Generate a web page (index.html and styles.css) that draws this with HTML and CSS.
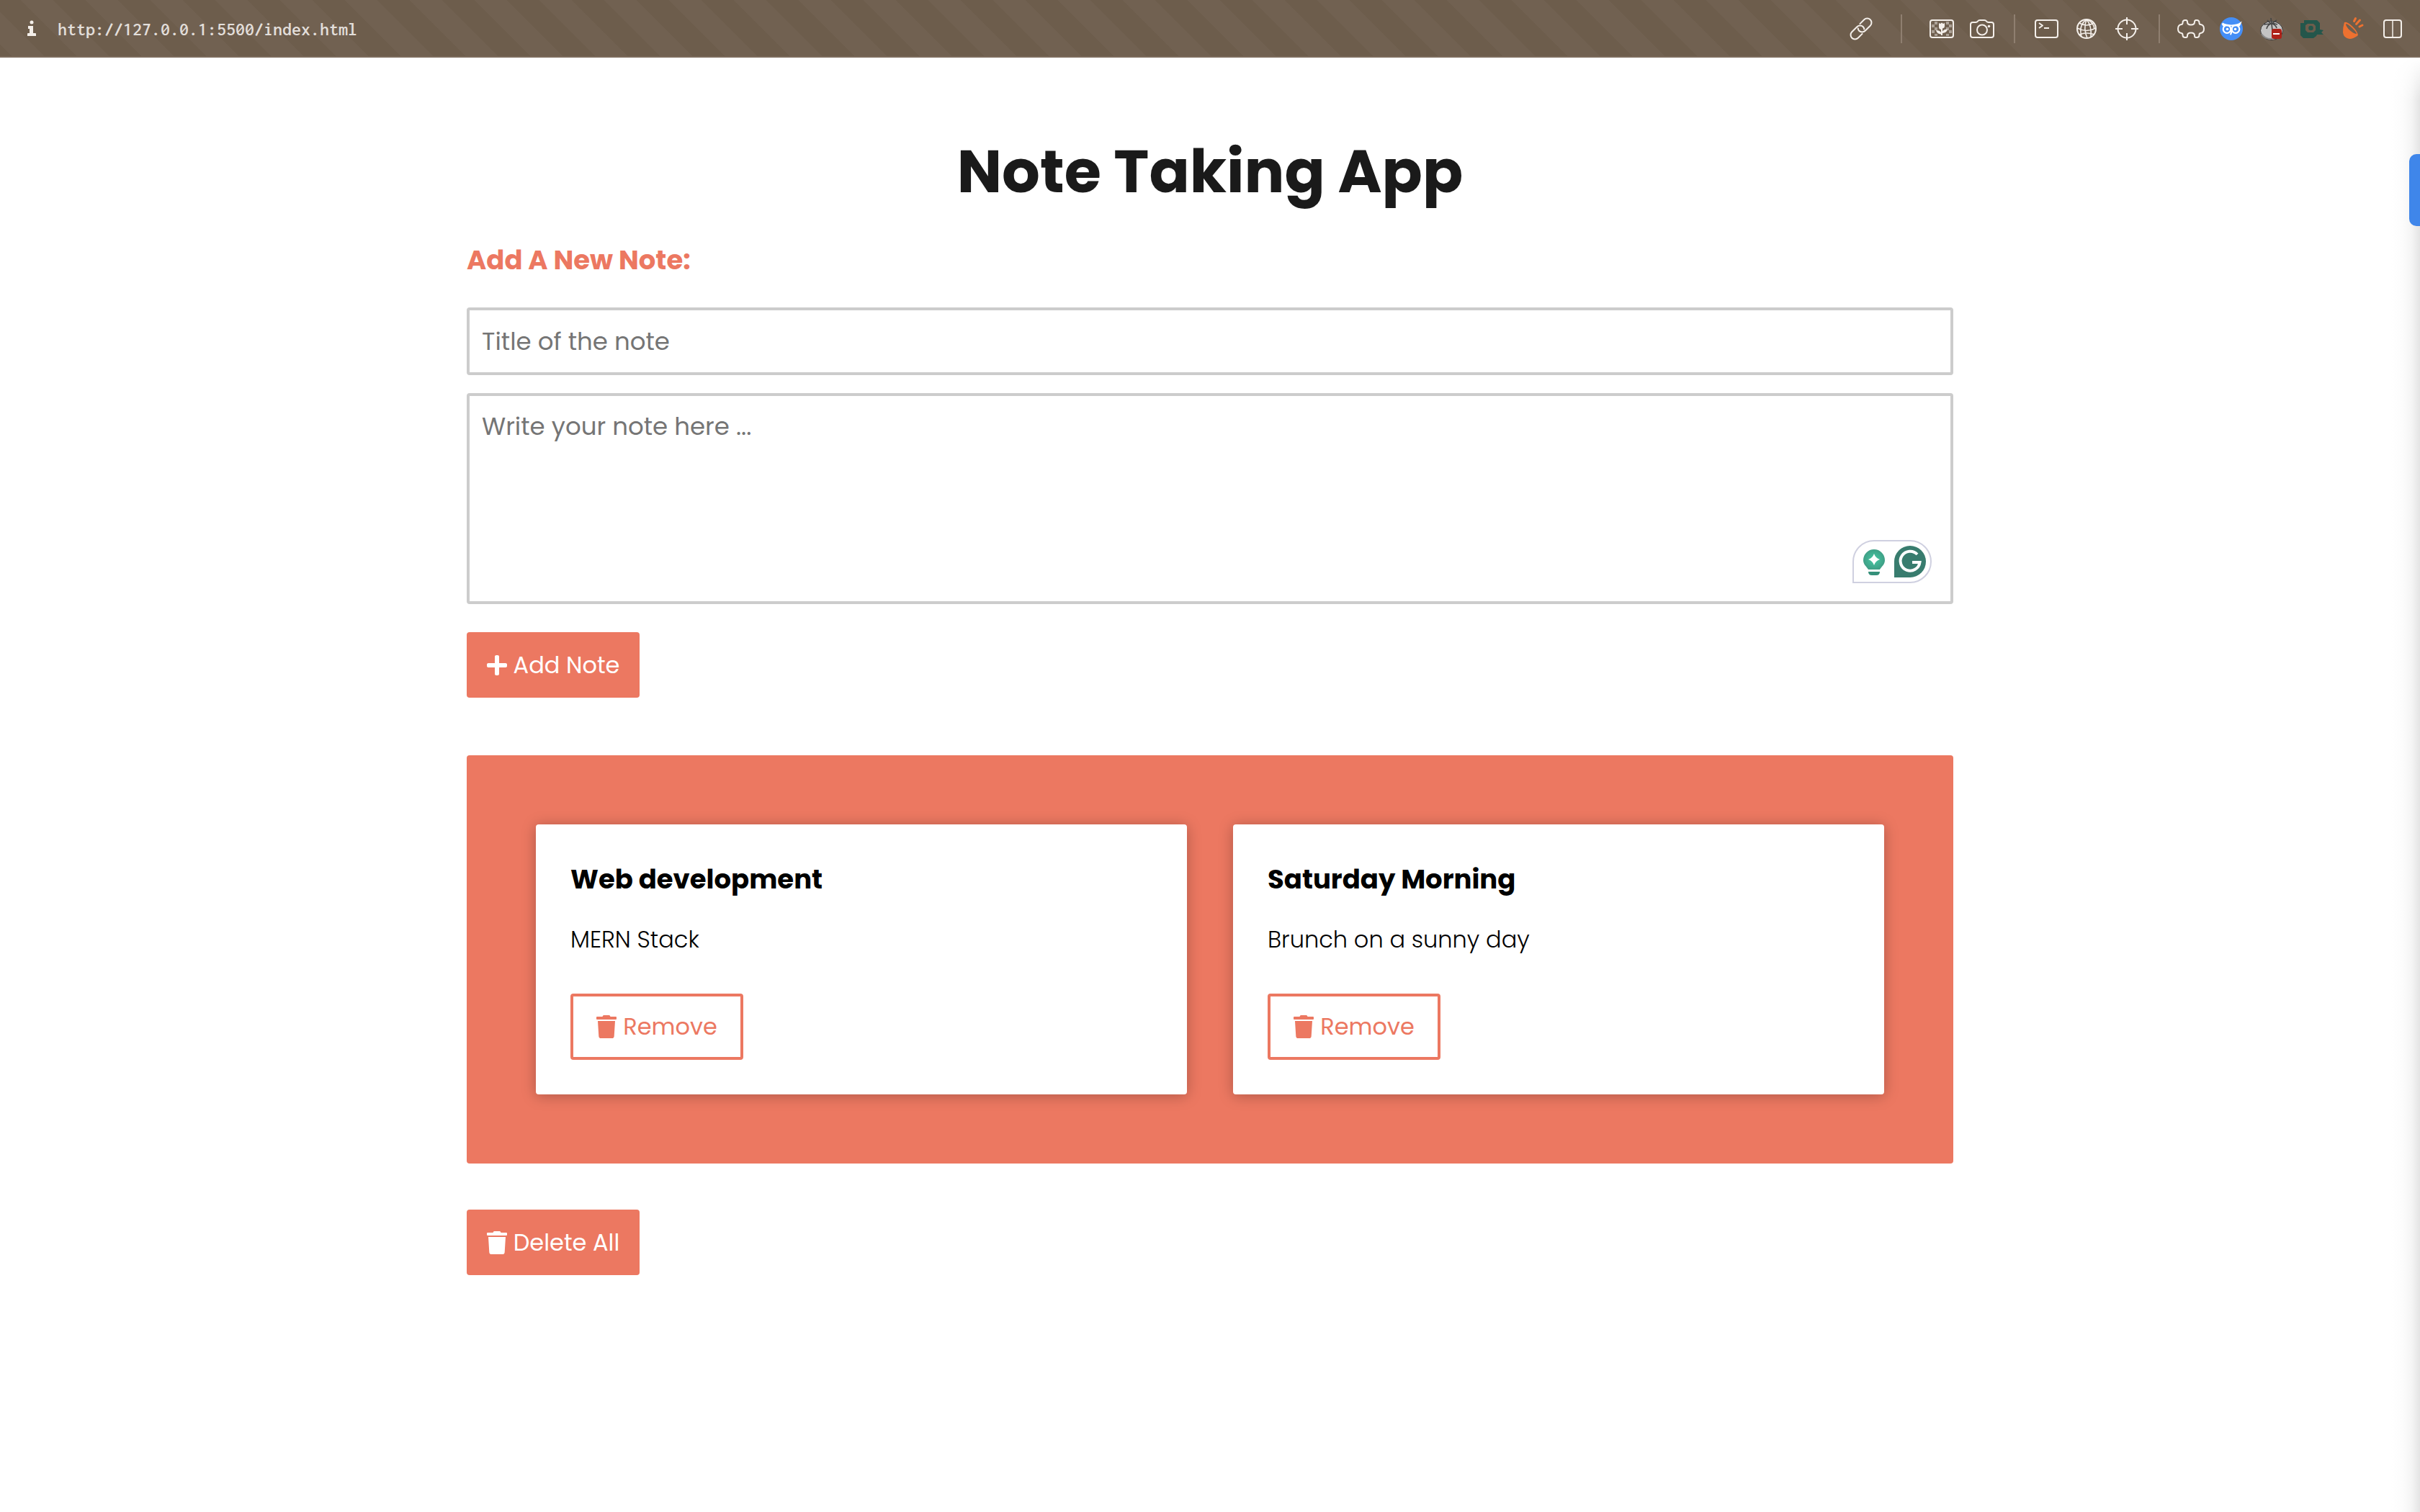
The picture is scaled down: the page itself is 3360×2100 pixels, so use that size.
FILE: index.html
```html
<!DOCTYPE html>
<html lang="en">
<head>
<meta charset="utf-8">
<meta name="viewport" content="width=device-width, initial-scale=1">
<title>Note Taking App</title>
<link rel="stylesheet" href="styles.css">
</head>
<body>
<header class="toolbar">
  <button class="site-info" type="button" aria-label="Site information">
    <svg viewBox="0 0 12 22" width="12" height="22" fill="currentColor"><circle cx="6" cy="3" r="2.500"/><path d="M1 8h7v10h3q1 0 1 1v3H0v-3q0-1 1-1h2v-6H1z"/></svg>
  </button>
  <input class="address" type="text" aria-label="Address" value="http://127.0.0.1:5500/index.html">
  <nav class="tools" aria-label="Browser tools">
    <button class="tool" type="button" aria-label="Copy link">
      <svg class="line" viewBox="0 0 40 40"><g transform="rotate(-45 20 20)"><path d="M17 26H8a6 6 0 0 1 0-12h10a6 6 0 0 1 6 6 5 5 0 0 1-2 4"/><path d="M23 14h9a6 6 0 0 1 0 12H22a6 6 0 0 1-6-6 5 5 0 0 1 2-4"/></g></svg>
    </button>
    <span class="divider divider-wide"></span>
    <button class="tool" type="button" aria-label="Images">
      <svg class="line" viewBox="0 0 40 40"><rect x="4" y="8" width="32" height="24" rx="3"/><g fill="currentColor" stroke="none"><path opacity=".45" d="M10 10h4v4h-4zM26 10h4v4h-4zM6 14h4v4H6zM30 14h4v4h-4zM10 18h4v4h-4zM26 18h4v4h-4zM6 22h4v4H6zM30 22h4v4h-4zM10 27h4v3h-4zM26 27h4v3h-4z"/><path d="M16 12l2 1 2-1.500 2 1.500 2-1v4q0 3-3 3.500v4q2-3 7-3-1 5-7 5.500V29h-2v-1.500q-6-.5-7-5.500 5 0 7 3v-4q-3-.5-3-3.500z"/></g></svg>
    </button>
    <button class="tool" type="button" aria-label="Capture page">
      <svg class="line" viewBox="0 0 40 40"><path d="M4 14q0-3 3-3h4q2 0 3-1.500T17 8h6q2 0 3 1.500t3 1.500h4q3 0 3 3v15q0 3-3 3H7q-3 0-3-3z"/><circle cx="20" cy="21.500" r="7"/><circle cx="29.500" cy="16.500" r="1.800" fill="currentColor" stroke="none"/></svg>
    </button>
    <span class="divider"></span>
    <button class="tool" type="button" aria-label="Console">
      <svg class="line" viewBox="0 0 40 40"><rect x="5" y="8" width="31" height="24" rx="3"/><path d="M10 12l5 3.500-5 3.500M17 19h7"/></svg>
    </button>
    <button class="tool" type="button" aria-label="Network">
      <svg class="line" viewBox="0 0 40 40"><circle cx="20" cy="20" r="13"/><g stroke-width="1.600"><path d="M20 7C13 12 10 20 13 31M20 7c-3 8-3 17 1 26M20 7c5 6 7 14 6 24M20 7c6 2 10 7 11 13M10 12q10 6 20 0M7 19q13 7 26 0M10 28q10-4 21 0"/></g></svg>
    </button>
    <button class="tool" type="button" aria-label="Inspect">
      <svg class="line" viewBox="0 0 40 40"><circle cx="20" cy="20" r="12.500"/><path d="M20 4v10M20 26v10M4 20h10M26 20h10"/></svg>
    </button>
    <span class="divider"></span>
    <button class="tool" type="button" aria-label="Extensions">
      <svg class="line" viewBox="0 0 40 40"><path d="M13 8c2 0 2 1 2 2.500 0 3 2 4 5 4s5-1 5-4C25 9 25 8 27 8h1c2.500 0 3.500 1.500 3.500 3.500 0 2 .5 2.500 2 2.500 3 .5 4.500 3 4.500 6s-1.500 5.500-4.500 6c-1.500 0-2 .5-2 2.500S30.500 32 28 32h-1c-2 0-2-1-2-2.500 0-3-2-4-5-4s-5 1-5 4c0 1.500 0 2.500-2 2.500h-1c-2.500 0-3.500-1.500-3.500-3.500 0-2-.5-2.500-2-2.500-3-.5-4.500-3-4.500-6s1.500-5.500 4.500-6c1.500 0 2-.5 2-2.500S9.500 8 12 8z"/></svg>
    </button>
    <button class="tool" type="button" aria-label="Owl extension">
      <svg viewBox="0 0 40 40"><circle cx="20" cy="20" r="16" fill="#448ef6"/><g fill="none" stroke="#fff" stroke-width="2.200"><path d="M7.500 12.500q4 3 12.500 3t12.500-3q-1 3-3 4M7.500 12.500q1 3 3 4"/><circle cx="14" cy="20.500" r="5.300"/><circle cx="26" cy="20.500" r="5.300"/><path d="M20 21v4q0 2-1.500 3"/></g><circle cx="14.500" cy="20.500" r="1.800" fill="#fff"/><circle cx="25.500" cy="20.500" r="1.800" fill="#fff"/></svg>
    </button>
    <button class="tool" type="button" aria-label="Timer extension">
      <svg viewBox="0 0 40 40"><ellipse cx="20" cy="22.500" rx="15.500" ry="13" fill="#c4c4c4" stroke="#343434"/><path d="M6 27q5 8 15 7" fill="none" stroke="#8c8c8c" stroke-width="2"/><path d="M20 13l-1-8M19 13l-5-5M18 13l-9 1M19 13q-5 2-6 7M20 13l1 9M21 13q5 2 6 6M21 12l7 2M21 12l6-4" fill="none" stroke="#464646" stroke-width="1.700"/><rect x="20" y="20" width="14" height="14" rx="3" fill="#ae2118"/><path d="M22 27h9" stroke="#fff" stroke-width="2"/></svg>
    </button>
    <button class="tool" type="button" aria-label="Chat extension">
      <svg viewBox="0 0 40 40"><path fill="#24564b" fill-rule="evenodd" d="M9 8h18l4 4v9l5 1-3 3 3 3h-9l-1 2-4 3H8l-4-4V12h5zM14 13l-3 2v7l3 3h8l3-3v-6l-3-3z"/><circle cx="18.500" cy="19" r="3.300" fill="#24564b"/></svg>
    </button>
    <button class="tool" type="button" aria-label="Light extension">
      <svg viewBox="0 0 40 40"><path d="M9 11q4-1 11 5.500T28 29q-6 5-12 5-8-1-9-9 0-8 2-14z" fill="#ed7130"/><path d="M11 13q3 0 9 6t6 8q-4 0-9.500-5T11 13z" fill="#6f5f4f"/><path d="M22.500 9.500l2-4M25.500 13.500l5-5.500M30 17l4-2" stroke="#ed7130" stroke-width="3" stroke-linecap="round"/></svg>
    </button>
    <button class="tool" type="button" aria-label="Split view">
      <svg class="line" viewBox="0 0 40 40"><rect x="8" y="8" width="24" height="24" rx="3"/><path d="M20 8v24" stroke-width="1.500"/></svg>
    </button>
  </nav>
</header>

<main class="page">
  <h1 class="page-title">Note Taking App</h1>

  <form class="note-form">
    <h2 class="form-title">Add A New Note:</h2>
    <input class="field field-title" type="text" aria-label="Title of the note" placeholder="Title of the note">
    <div class="field-wrap">
      <textarea class="field field-body" aria-label="Write your note here" placeholder="Write your note here ..."></textarea>
      <svg class="writing-badge" viewBox="0 0 110 60" width="110" height="60" aria-hidden="true">
        <defs><radialGradient id="glow"><stop offset="0" stop-color="#46c9a4"/><stop offset="1" stop-color="#3f9f86"/></radialGradient></defs>
        <path d="M1 59V30A29 29 0 0 1 30 1h50a29 29 0 0 1 0 58z" fill="#fff" stroke="#cfd0e0" stroke-width="2"/>
        <path d="M30 13a15 15 0 0 1 15 15c0 6-4 8-7 13H22c-3-5-7-7-7-13a15 15 0 0 1 15-15z" fill="url(#glow)"/>
        <path d="M22 44h16q0 5-5 5h-6q-5 0-5-5z" fill="#35907a"/>
        <path d="M30 19q2 6 8 8-6 2-8 8-2-6-8-8 6-2 8-8z" fill="#fff"/>
        <path d="M58 52V30a22 22 0 1 1 22 22z" fill="#387c6e"/>
        <path d="M90 20a13.500 13.500 0 1 0 3.500 11H83" fill="none" stroke="#fff" stroke-width="4"/>
      </svg>
    </div>
    <button class="btn btn-solid" type="button">
      <svg class="btn-icon" viewBox="0 0 448 512"><path d="M416 208H272V64c0-17.670-14.330-32-32-32h-32c-17.670 0-32 14.330-32 32v144H32c-17.670 0-32 14.330-32 32v32c0 17.670 14.330 32 32 32h144v144c0 17.670 14.330 32 32 32h32c17.670 0 32-14.330 32-32V304h144c17.670 0 32-14.330 32-32v-32c0-17.670-14.330-32-32-32z"/></svg>
      Add Note
    </button>
  </form>

  <section class="notes" aria-label="Notes">
    <article class="note">
      <h3 class="note-title">Web development</h3>
      <p class="note-text">MERN Stack</p>
      <button class="btn btn-outline" type="button">
        <svg class="btn-icon" viewBox="0 0 448 512"><path d="M432 32H312l-9.400-18.700A24 24 0 0 0 281.100 0H166.800a23.720 23.720 0 0 0-21.400 13.300L136 32H16A16 16 0 0 0 0 48v32a16 16 0 0 0 16 16h416a16 16 0 0 0 16-16V48a16 16 0 0 0-16-16zM53.200 467a48 48 0 0 0 47.900 45h245.800a48 48 0 0 0 47.900-45L416 128H32z"/></svg>
        Remove
      </button>
    </article>
    <article class="note">
      <h3 class="note-title">Saturday Morning</h3>
      <p class="note-text">Brunch on a sunny day</p>
      <button class="btn btn-outline" type="button">
        <svg class="btn-icon" viewBox="0 0 448 512"><path d="M432 32H312l-9.400-18.700A24 24 0 0 0 281.100 0H166.800a23.720 23.720 0 0 0-21.400 13.300L136 32H16A16 16 0 0 0 0 48v32a16 16 0 0 0 16 16h416a16 16 0 0 0 16-16V48a16 16 0 0 0-16-16zM53.200 467a48 48 0 0 0 47.900 45h245.800a48 48 0 0 0 47.900-45L416 128H32z"/></svg>
        Remove
      </button>
    </article>
  </section>

  <button class="btn btn-solid" type="button">
    <svg class="btn-icon" viewBox="0 0 448 512"><path d="M432 32H312l-9.400-18.700A24 24 0 0 0 281.100 0H166.800a23.720 23.720 0 0 0-21.400 13.300L136 32H16A16 16 0 0 0 0 48v32a16 16 0 0 0 16 16h416a16 16 0 0 0 16-16V48a16 16 0 0 0-16-16zM53.200 467a48 48 0 0 0 47.900 45h245.800a48 48 0 0 0 47.900-45L416 128H32z"/></svg>
    Delete All
  </button>
</main>

<div class="side-edge"></div>
<button class="side-handle" type="button" aria-label="Open side panel"></button>
</body>
</html>
```
FILE: styles.css
```css
:root {
  --coral: #ec7861;
  --radius: 4px;
}

* {
  box-sizing: border-box;
}

body {
  margin: 0;
  position: relative;
  min-height: 100vh;
  overflow-x: hidden;
  background: #fff;
  color: #000;
  font-family: Poppins, Inter, "Open Sans", sans-serif;
  font-size: 32px;
}

button,
input,
textarea {
  margin: 0;
  font: inherit;
}

/* Browser toolbar */
.toolbar {
  display: flex;
  align-items: center;
  height: 80px;
  padding: 0 10px 0 16px;
  border-bottom: 2px solid #7c6b5c;
  background: #6d5d4c linear-gradient(45deg, #6d5d4c 25%, #716151 25% 50%, #6d5d4c 50% 75%, #716151 75%) 0 16px / 90px 90px;
  color: #f4efea;
}

.site-info,
.tool {
  display: flex;
  align-items: center;
  justify-content: center;
  width: 56px;
  height: 56px;
  padding: 0;
  border: 0;
  background: none;
  color: inherit;
}

.address {
  flex: 1;
  min-width: 0;
  padding: 2px 8px 0;
  border: 0;
  background: none;
  color: #e2deda;
  font-family: Inconsolata, "DejaVu Sans Mono", "Liberation Mono", monospace;
  font-size: 26px;
  font-weight: 600;
}

.tools {
  display: flex;
  align-items: center;
  padding-top: 2px;
}

.tool svg {
  width: 40px;
  height: 40px;
}

.line {
  fill: none;
  stroke: currentColor;
  stroke-width: 2;
  stroke-linejoin: round;
}

.divider {
  width: 2px;
  height: 40px;
  margin: 0 15px 0 16px;
  background: #8f7f70;
}

.divider-wide {
  margin: 0 27px;
}

/* Page */
.page {
  max-width: 2160px;
  margin: 0 auto;
  padding: 95px 48px;
}

.page-title {
  margin: 0 0 32px;
  color: #1a1a1a;
  font-size: 83px;
  font-weight: 700;
  line-height: 126px;
  text-align: center;
}

.form-title,
.note-title {
  margin: 0;
  font-size: 37px;
  font-weight: 700;
  line-height: 56px;
}

.form-title {
  margin-bottom: 38px;
  color: var(--coral);
}

.field {
  display: block;
  width: 100%;
  padding: 17px;
  border: 4px solid #ccc;
  border-radius: var(--radius);
  background: #fff;
  font-size: 34px;
  line-height: 51px;
}

.field::placeholder {
  color: #757575;
}

.field-title {
  height: 94px;
  margin-bottom: 25px;
}

.field-wrap {
  position: relative;
  margin-bottom: 39px;
}

.field-body {
  height: 293px;
  resize: none;
}

.writing-badge {
  position: absolute;
  right: 30px;
  bottom: 29px;
}

.btn {
  display: flex;
  align-items: center;
  justify-content: center;
  gap: 9px;
  min-width: 240px;
  height: 91px;
  padding: 0 24px;
  border: 0;
  border-radius: var(--radius);
}

.btn-solid {
  background: var(--coral);
  color: #fff;
}

.btn-outline {
  height: 92px;
  border: 4px solid var(--coral);
  background: #fff;
  color: var(--coral);
}

.btn-icon {
  width: 28px;
  height: 32px;
  fill: currentColor;
}

.notes {
  display: grid;
  grid-template-columns: 1fr 1fr;
  gap: 64px;
  margin: 80px 0 64px;
  padding: 96px;
  border-radius: var(--radius);
  background: var(--coral);
}

.note {
  padding: 48px;
  border-radius: var(--radius);
  background: #fff;
  box-shadow: 0 2px 20px rgba(0, 0, 0, .26);
}

.note-text {
  margin: 30px 0 50px;
  font-weight: 300;
  line-height: 51px;
}

/* Side panel tucked past the right edge of the window */
.side-edge {
  position: absolute;
  top: 80px;
  right: 0;
  bottom: 0;
  width: 40px;
  background: linear-gradient(to left, #e4e4e4, #f5f5f5 30%, #fcfcfc 60%, #fff);
  mask-image: linear-gradient(transparent, #000 60px);
}

.side-handle {
  position: absolute;
  top: 214px;
  right: 0;
  width: 15px;
  height: 100px;
  padding: 0;
  border: 0;
  border-radius: 10px 0 0 10px;
  background: #3f86ea;
}
```
